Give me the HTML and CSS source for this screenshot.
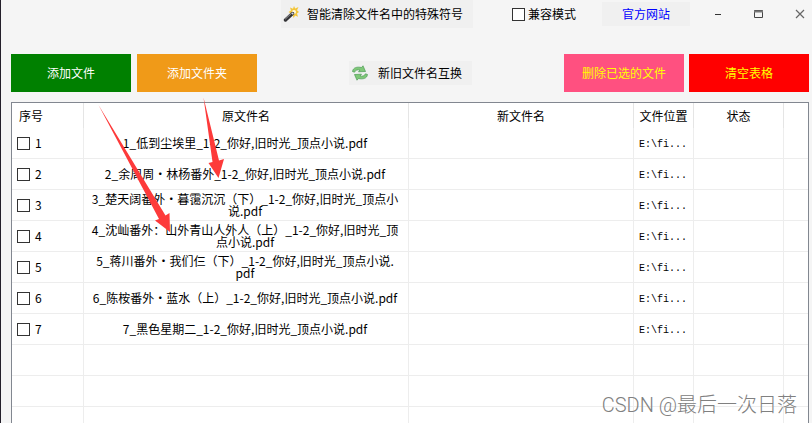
FILE: index.html
```html
<!DOCTYPE html>
<html lang="zh-CN">

<head>
    <meta charset="UTF-8">
    <meta name="viewport" content="width=device-width, initial-scale=1.0">
    <title>文件名批量修改</title>
    <link rel="stylesheet" href="styles.css">
</head>

<body>
    <div class="window">
        <header class="titlebar">
            <button class="tool-btn clean-btn">
                <svg width="16" height="16" viewBox="0 0 16 16">
                    <path d="M11 0l1.200 2.600L15.500 1 14 4.200 16 6l-2 1.600 1 3.200-3-1.200L10.800 12 9.600 9.200 6.500 10.500 8 7.500 5.500 6 8 4.500 7 1.500l3 1.200z" fill="#f3c63a"/>
                    <circle cx="11" cy="6" r="2" fill="#fffbe0"/>
                    <path d="M2.500 14l7-6.500" stroke="#333336" stroke-width="3.400" stroke-linecap="round"/>
                    <path d="M2.200 13.200l6-5.600" stroke="#9a9a9e" stroke-width="1"/>
                    <path d="M9 8l1-1" stroke="#dcdce0" stroke-width="2.400"/>
                </svg>
                <span>智能清除文件名中的特殊符号</span>
            </button>
            <label class="compat"><input type="checkbox" class="check">兼容模式</label>
            <a class="site-link" href="#">官方网站</a>
            <div class="win-controls">
                <button class="win-btn" aria-label="最小化">
                    <svg width="10" height="10" viewBox="0 0 10 10"><path d="M2 5.500h6" stroke="#333"/></svg>
                </button>
                <button class="win-btn" aria-label="最大化">
                    <svg width="10" height="10" viewBox="0 0 10 10"><path d="M.5 1.500h8v7h-8z" fill="none" stroke="#444"/><path d="M0 2.500h9" stroke="#777" stroke-width="2"/></svg>
                </button>
                <button class="win-btn" aria-label="关闭">
                    <svg width="10" height="10" viewBox="0 0 10 10"><path d="M1 1l8 8M9 1l-8 8" stroke="#666" stroke-width="1.200"/></svg>
                </button>
            </div>
        </header>

        <div class="toolbar">
            <div class="btn-group">
                <button class="btn green">添加文件</button>
                <button class="btn orange">添加文件夹</button>
            </div>
            <button class="tool-btn swap-btn">
                <svg width="18" height="16" viewBox="0 0 18 16">
                    <path d="M1.500 6.500C2 2.500 6 1.500 10.500 2.500L12 .8l2.500 5.700-7 .3L9 5C6.500 4.500 4.500 5 3.500 7.200z" fill="#7fc878" stroke="#4b9a55" stroke-width=".7"/>
                    <path d="M16.500 9.500c-.5 4-4.500 5-9 4L6 15.200 3.500 9.500l7-.3L9 11c2.500.5 4.500 0 5.500-2.200z" fill="#7fc878" stroke="#4b9a55" stroke-width=".7"/>
                </svg>
                <span>新旧文件名互换</span>
            </button>
            <div class="btn-group tight">
                <button class="btn pink">删除已选的文件</button>
                <button class="btn red">清空表格</button>
            </div>
        </div>

        <main class="list">
            <table class="file-table">
                <colgroup>
                    <col class="col-num">
                    <col class="col-old">
                    <col class="col-new">
                    <col class="col-path">
                    <col class="col-state">
                    <col>
                </colgroup>
                <thead>
                    <tr>
                        <th class="num">序号</th>
                        <th>原文件名</th>
                        <th>新文件名</th>
                        <th>文件位置</th>
                        <th>状态</th>
                        <th></th>
                    </tr>
                </thead>
                <tbody>
                    <tr>
                        <td><label class="pick"><input type="checkbox" class="check">1</label></td>
                        <td class="name">1_低到尘埃里_1-2_你好,旧时光_顶点小说.pdf</td>
                        <td></td>
                        <td class="path">E:\fi...</td>
                        <td></td>
                        <td></td>
                    </tr>
                    <tr>
                        <td><label class="pick"><input type="checkbox" class="check">2</label></td>
                        <td class="name">2_余周周·林杨番外_1-2_你好,旧时光_顶点小说.pdf</td>
                        <td></td>
                        <td class="path">E:\fi...</td>
                        <td></td>
                        <td></td>
                    </tr>
                    <tr>
                        <td><label class="pick"><input type="checkbox" class="check">3</label></td>
                        <td class="name">3_楚天阔番外·暮霭沉沉（下）_1-2_你好,旧时光_顶点小<br>说.pdf</td>
                        <td></td>
                        <td class="path">E:\fi...</td>
                        <td></td>
                        <td></td>
                    </tr>
                    <tr>
                        <td><label class="pick"><input type="checkbox" class="check">4</label></td>
                        <td class="name">4_沈屾番外：山外青山人外人（上）_1-2_你好,旧时光_顶<br>点小说.pdf</td>
                        <td></td>
                        <td class="path">E:\fi...</td>
                        <td></td>
                        <td></td>
                    </tr>
                    <tr>
                        <td><label class="pick"><input type="checkbox" class="check">5</label></td>
                        <td class="name">5_蒋川番外·我们仨（下）_1-2_你好,旧时光_顶点小说.<br>pdf</td>
                        <td></td>
                        <td class="path">E:\fi...</td>
                        <td></td>
                        <td></td>
                    </tr>
                    <tr>
                        <td><label class="pick"><input type="checkbox" class="check">6</label></td>
                        <td class="name">6_陈桉番外·蓝水（上）_1-2_你好,旧时光_顶点小说.pdf</td>
                        <td></td>
                        <td class="path">E:\fi...</td>
                        <td></td>
                        <td></td>
                    </tr>
                    <tr>
                        <td><label class="pick"><input type="checkbox" class="check">7</label></td>
                        <td class="name">7_黑色星期二_1-2_你好,旧时光_顶点小说.pdf</td>
                        <td></td>
                        <td class="path">E:\fi...</td>
                        <td></td>
                        <td></td>
                    </tr>
                    <tr><td></td><td></td><td></td><td></td><td></td><td></td></tr>
                    <tr><td></td><td></td><td></td><td></td><td></td><td></td></tr>
                    <tr><td></td><td></td><td></td><td></td><td></td><td></td></tr>
                </tbody>
            </table>
        </main>

        <!-- 箭头标注 -->
        <svg class="arrows" width="240" height="240" viewBox="0 0 240 240">
            <path d="M98.500 105L165.500 215.500 169.500 213 170 232 155 220.500 159 219z" fill="#fd3a3a"/>
            <path d="M203.500 97.500L219 160.500 224 159 218.500 178 208.500 163 212.500 162z" fill="#fd3a3a"/>
        </svg>
        <div class="watermark">CSDN @最后一次日落</div>
    </div>
</body>

</html>
```
FILE: styles.css
```css
* {
    box-sizing: border-box;
}

body {
    margin: 0;
    font-family: "Noto Sans CJK SC", sans-serif;
    font-size: 12px;
    line-height: 16px;
    color: #000;
    background-color: #f5f5f5;
}

button {
    font: inherit;
    border: none;
    padding: 0;
    cursor: pointer;
}

.window {
    position: relative;
    display: flex;
    flex-direction: column;
    height: 100vh;
    overflow: hidden;
    border-left: 1px solid #24202b;
}

.titlebar {
    display: flex;
    justify-content: flex-end;
    align-items: center;
    height: 28px;
    padding-right: 2px;
}

.tool-btn {
    display: flex;
    align-items: center;
    background-color: #f0f0f0;
}

.clean-btn {
    height: 28px;
    gap: 8px;
    padding: 0 10px 0 2px;
    margin-right: 39px;
}

.check {
    appearance: none;
    width: 13px;
    height: 13px;
    margin: 0;
    border: 1px solid #333;
    background-color: #fff;
}

.compat {
    display: flex;
    align-items: center;
    gap: 3px;
    margin-right: 26px;
}

.site-link {
    width: 88px;
    line-height: 24px;
    margin-right: 18px;
    text-align: center;
    text-decoration: none;
    color: #0000ff;
    background-color: #f0f0f0;
}

.win-controls {
    display: flex;
    gap: 21px;
}

.win-btn {
    display: flex;
    justify-content: center;
    align-items: center;
    width: 20px;
    height: 20px;
    background: none;
}

.toolbar {
    display: flex;
    justify-content: space-between;
    align-items: center;
    margin: 26px 3px 10px 10px;
}

.btn-group {
    display: flex;
    gap: 6px;
}

.btn-group.tight {
    gap: 5px;
}

.btn {
    width: 120px;
    height: 38px;
    color: #fff;
}

.green {
    background-color: #008000;
}

.orange {
    background-color: #f09a18;
}

.pink {
    background-color: #ff5080;
    color: #ffff00;
}

.red {
    background-color: #ff0000;
    color: #ffff00;
}

.swap-btn {
    height: 24px;
    gap: 9px;
    padding: 0 10px 0 2px;
}

.list {
    flex: 1;
    min-height: 0;
    margin: 0 3px 0 10px;
    overflow: hidden;
    border: 1px solid #828790;
    border-bottom: none;
    background-color: #fff;
}

.file-table {
    width: 100%;
    table-layout: fixed;
    border-collapse: separate;
    border-spacing: 0;
}

.col-num {
    width: 72px;
}

.col-old {
    width: 325px;
}

.col-new {
    width: 225px;
}

.col-path {
    width: 60px;
}

.col-state {
    width: 90px;
}

th {
    height: 25px;
    padding: 0;
    font-weight: normal;
    border-right: 1px solid #e5e5e5;
}

th.num {
    padding-left: 7px;
    text-align: left;
}

td {
    height: 31px;
    padding: 0;
    border-right: 1px solid #ededed;
    border-bottom: 1px solid #ededed;
}

th:last-child,
td:last-child {
    border-right: none;
}

.pick {
    display: flex;
    align-items: center;
    gap: 5px;
    padding-left: 5px;
}

.name {
    padding-right: 2px;
    line-height: 12px;
    text-align: center;
    white-space: nowrap;
}

.path {
    padding: 3px 0 0 5px;
    font-family: "Liberation Mono", monospace;
    font-size: 10px;
}

.arrows {
    position: absolute;
    top: 0;
    left: -1px;
    pointer-events: none;
}

.watermark {
    position: absolute;
    right: 15px;
    bottom: 6px;
    font-family: Roboto, "Noto Sans CJK SC", sans-serif;
    font-weight: 300;
    font-size: 20px;
    line-height: 24px;
    color: #808080;
}
```
